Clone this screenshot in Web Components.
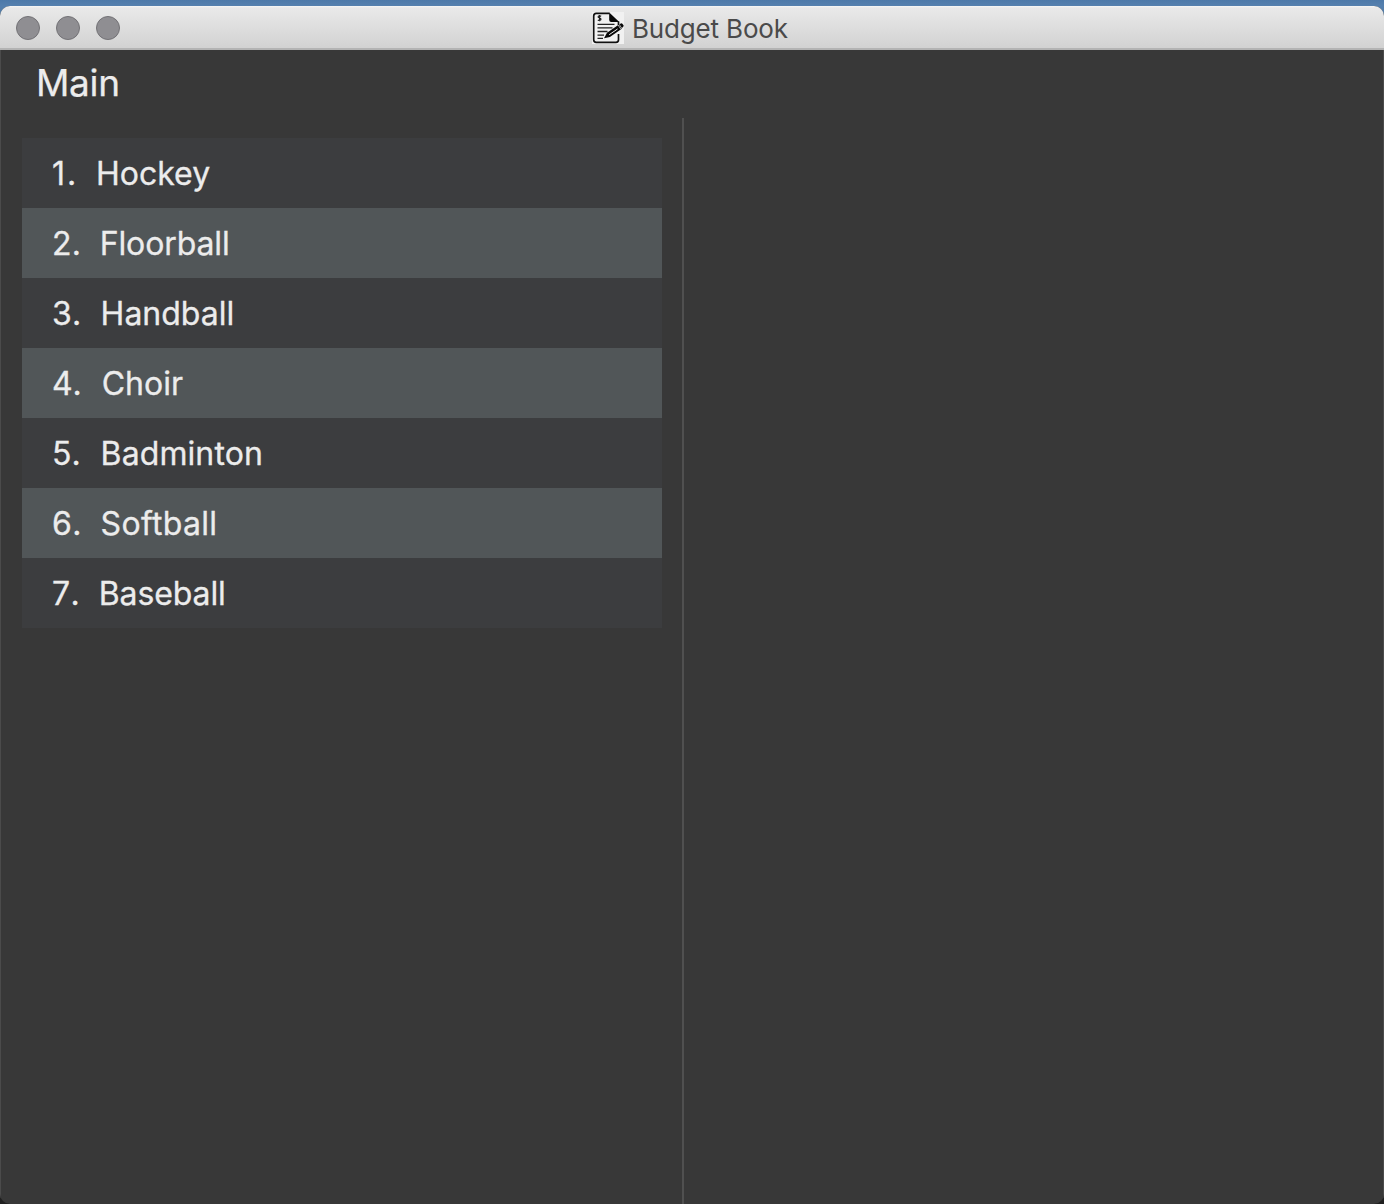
<!DOCTYPE html>
<html lang="en"><head><meta charset="utf-8"><title>Budget Book</title>
<style>html,body{margin:0;height:100%;overflow:hidden}body{background:linear-gradient(#4d79a9,#5580ae 6px,#50799f 20px,#202020 60px);font-family:Inter,"Liberation Sans",sans-serif}</style></head>
<body>
<app-window>
<title-bar slot="bar">Budget Book</title-bar>
<menu-bar slot="menu">Main</menu-bar>
<account-list slot="list">
<account-row num="1." style="--n:44px;--d:2px">Hockey</account-row>
<account-row num="2." style="--n:47.7px;--d:.3px;--s:-.12px">Floorball</account-row>
<account-row num="3." style="--n:48.6px;--d:1px">Handball</account-row>
<account-row num="4." style="--n:49.7px;--d:1px">Choir</account-row>
<account-row num="5." style="--n:48.6px;--d:1px;--s:.1px">Badminton</account-row>
<account-row num="6." style="--n:48.6px;--d:1.5px;--s:.3px">Softball</account-row>
<account-row num="7." style="--n:46.8px;--d:4.3px;--s:-.12px">Baseball</account-row>
</account-list>
</app-window>
<script>
function define(name, html, setup){
  customElements.define(name, class extends HTMLElement{
    constructor(){super();this.attachShadow({mode:'open'}).innerHTML=html;}
    connectedCallback(){if(setup)setup(this,this.shadowRoot);}
  });
}
define('title-bar',`<style>
:host{display:flex;box-sizing:border-box;height:44px;flex:none;align-items:center;background:linear-gradient(#f6f6f6,#e9e9e9 2px,#d2d2d2 42px,#b3b3b3 42px,#b3b3b3);padding:0 16px;color:#4a4a4a;font-size:26px;line-height:44px}
.lights{display:flex;gap:16px;width:576px}
i{box-sizing:border-box;width:24px;height:24px;border-radius:50%;background:#8f8e92;border:1px solid #737276}
svg{display:block;width:32px;height:32px;margin-right:8px}
span{white-space:nowrap;letter-spacing:-.17px;margin-top:2px}
</style><div class="lights"><i></i><i></i><i></i></div>
<svg viewBox="0 0 32 32"><path fill="#f1f1f1" d="M0 0h32v32H0z"/>
<path d="M17.5 1.4H4.2Q1.7 1.4 1.7 3.9V27.8Q1.7 30.3 4.2 30.3H24Q26.5 30.3 26.5 27.8V22M26.5 13V9.5" fill="none" stroke="#111" stroke-width="1.7"/>
<path d="M17.2.5 27.3 10H19.2Q17.2 10 17.2 8Z" fill="#080808"/>
<path d="M5.5 12.3H22.5M5.5 15.9H20.5M5.5 19.5H15.5M5.5 23.1H12M5.5 26.3H11" stroke="#222" stroke-width="1.3"/>
<path d="M9.2 4.3Q7.9 3.6 6.5 4.1 5.4 5.3 7.5 6 9.6 6.8 8.7 8 7.4 8.8 5.8 7.9M7.6 3V9.3" fill="none" stroke="#222" stroke-width="1.2"/>
<path d="M12 26.3 15 20.7 27 12.6 29.8 16.8 17.9 25Z" fill="#080808"/>
<path d="M17.2 22.7 25.5 17" stroke="#f1f1f1" stroke-width="1"/><path d="M26.2 13 28.9 17.3" stroke="#f1f1f1" stroke-width=".7"/>
<path d="M27.5 12.3 29.3 11.3Q30.2 11.2 31.7 13.6 31.7 14.8 29.9 16Z" fill="#080808"/></svg>
<span><slot></slot></span>`);
define('menu-bar',`<style>:host{display:block;box-sizing:border-box;height:68px;padding-left:35px;font-size:37px;line-height:66px;color:#ececec;letter-spacing:-.3px;-webkit-text-stroke:.25px currentColor}</style><slot></slot>`);
define('account-list',`<style>:host{display:flex;flex-direction:column;width:640px}
::slotted(:nth-child(odd)){background:#3c3d3f}::slotted(:nth-child(even)){background:#515658}</style><slot></slot>`);
define('account-row',`<style>:host{display:flex;box-sizing:border-box;height:70px;padding-left:30px;font-size:32px;line-height:72px;color:#ececec;white-space:nowrap;-webkit-text-stroke:.3px currentColor}
b{font-weight:inherit;flex:none;width:var(--n);letter-spacing:var(--d,0)}span{letter-spacing:var(--s,0)}</style><b></b><span><slot></slot></span>`,(h,r)=>{r.querySelector('b').textContent=h.getAttribute('num')});
define('app-window',`<style>:host{display:block;box-sizing:border-box;height:1204px;padding-top:6px}
.win{display:flex;flex-direction:column;height:1198px;border-radius:10px;overflow:hidden;background:#383838}
.body{flex:1;display:flex;flex-direction:column;box-sizing:border-box;border:solid #4b4b4b;border-width:0 1px}
.panes{flex:1;display:flex}.left{box-sizing:border-box;width:681px;padding:20px 0 0 21px}.right{flex:1;border-left:2px solid #505050}
</style><div class="win"><slot name="bar"></slot><div class="body"><slot name="menu"></slot><div class="panes"><div class="left"><slot name="list"></slot></div><div class="right"></div></div></div></div>`);
</script></body></html>
